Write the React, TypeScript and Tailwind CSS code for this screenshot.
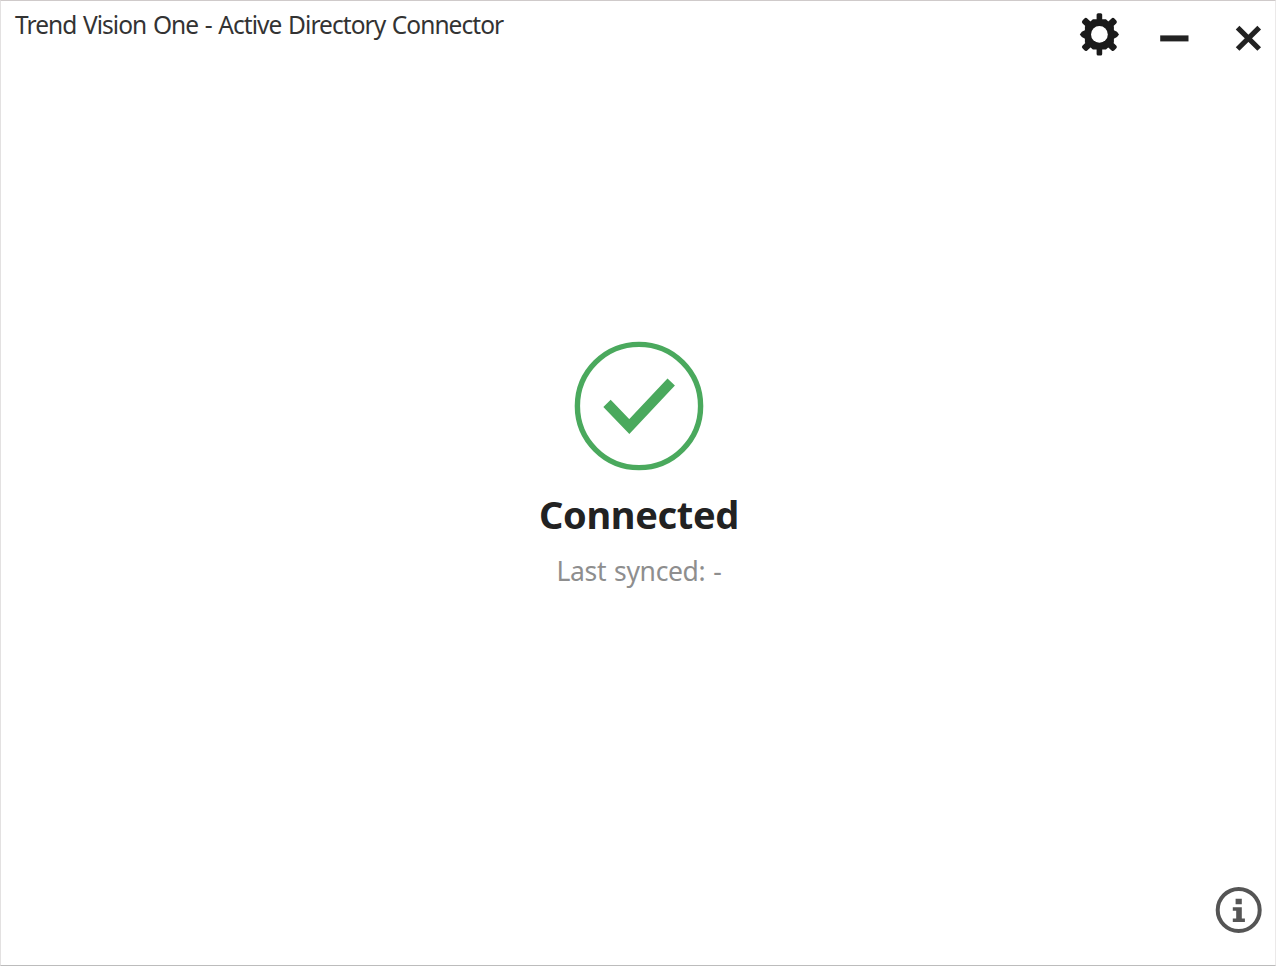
function GearIcon() {
  return (
    <svg width="40" height="44" viewBox="-20.4 -22.4 40 44" className="block" aria-hidden="true">
      <g fill="#1a1a1a">
        <rect x="-2.8" y="-21.2" width="5.6" height="42.4" rx="1.5" />
        <path d="M-19.6 0 -17.6 -2.6 -13 -5H13L17.6 -2.6 19.6 0 17.6 2.6 13 5H-13L-17.6 2.6Z" />
        <rect x="-21.8" y="-3.4" width="43.6" height="6.8" rx="2" transform="rotate(43)" />
        <rect x="-21.8" y="-3.4" width="43.6" height="6.8" rx="2" transform="rotate(-43)" />
        <path d="M-6.5 -15.2H6.5L14.5 -8V8L6.5 15.2H-6.5L-14.5 8V-8Z" />
      </g>
      <circle r="8.4" fill="#fff" />
    </svg>
  );
}

function CheckCircle() {
  return (
    <svg width="130" height="130" viewBox="574 341 130 130" fill="none" stroke="#4aa95d" aria-hidden="true">
      <circle cx="639" cy="406" r="61.6" strokeWidth="5.4" />
      <path d="M607 403.4 629.3 426.6 671.2 382" strokeWidth="10.2" />
    </svg>
  );
}

function InfoIcon() {
  return (
    <svg width="48" height="48" viewBox="0 0 48 48" className="block" aria-hidden="true">
      <circle cx="23.7" cy="24" r="21" fill="none" stroke="#555" strokeWidth="4" />
      <path
        d="M20.6 12.8h6.2v5.4h-6.2ZM17.8 21.3h9v11.3h3.1v3.4H17.8v-3.4h3.4v-7.9h-3.4Z"
        fill="#555"
      />
    </svg>
  );
}

export default function App() {
  return (
    <div className="flex h-[966px] w-[1276px] flex-col overflow-hidden border border-t-[#cfcaca] border-r-[#ebe9e9] border-b-[#bcbcbc] border-l-[#e3e1e1] bg-white font-['Noto_Sans','Open_Sans',sans-serif]">
      <header className="flex h-[60px] items-start justify-between pl-[14px]">
        <h1 className="mt-[6px] text-[24.5px] leading-9 font-normal tracking-[-0.95px] whitespace-nowrap text-[#333] [word-spacing:1.2px]">
          Trend Vision One - Active Directory Connector
        </h1>
        <div className="flex items-start pr-[13px]">
          <button type="button" aria-label="Settings" className="mt-[11px]">
            <GearIcon />
          </button>
          <button type="button" aria-label="Minimize" className="mt-[21px] ml-[40px]">
            <svg width="30" height="32" viewBox="0 0 30 32" className="block">
              <path d="M1.2 16.4h28.3" stroke="#222" strokeWidth="6" />
            </svg>
          </button>
          <button type="button" aria-label="Close" className="mt-[24px] ml-[45px]">
            <svg width="28" height="26" viewBox="0 0 28 26" className="block">
              <path d="M3.6 2.6 25.2 24M25.2 2.6 3.6 24" stroke="#222" strokeWidth="5.2" />
            </svg>
          </button>
        </div>
      </header>

      <main className="flex flex-1 flex-col items-center pt-[280px] pl-[2px]">
        <CheckCircle />
        <h2 className="mt-[17px] text-[38px] leading-[52px] font-bold tracking-[-0.35px] text-[#222]">
          Connected
        </h2>
        <p className="mt-[13px] text-[26.5px] leading-9 tracking-[-0.35px] text-[#8e8e8e] [word-spacing:1.4px]">
          Last synced: -
        </p>
      </main>

      <footer className="flex justify-end pr-[12px] pb-[31px]">
        <button type="button" aria-label="About">
          <InfoIcon />
        </button>
      </footer>
    </div>
  );
}
